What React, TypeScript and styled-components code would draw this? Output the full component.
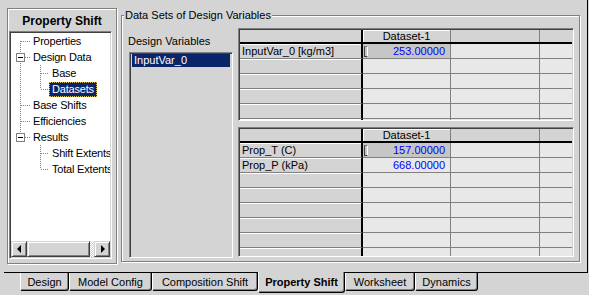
import React from "react";
import styled, { createGlobalStyle, css } from "styled-components";

const FACE = "#d4d4d4";

const GlobalStyle = createGlobalStyle`
  html, body { margin: 0; padding: 0; background: ${FACE}; }
  body {
    font-family: "Liberation Sans", Arial, sans-serif;
    font-size: 11px;
    color: #000;
  }
  * { box-sizing: border-box; }
`;

type TreeNode = {
  label: string;
  level: 1 | 2;
  first?: boolean;
  last?: boolean;
  expanded?: boolean;
  lastChild?: boolean;
  parentLast?: boolean;
  selected?: boolean;
};

const tree: TreeNode[] = [
  { label: "Properties", level: 1, first: true },
  { label: "Design Data", level: 1, expanded: true },
  { label: "Base", level: 2 },
  { label: "Datasets", level: 2, lastChild: true, selected: true },
  { label: "Base Shifts", level: 1 },
  { label: "Efficiencies", level: 1 },
  { label: "Results", level: 1, expanded: true, last: true },
  { label: "Shift Extents", level: 2, parentLast: true },
  { label: "Total Extents", level: 2, lastChild: true, parentLast: true },
];

type GridRowData = { label: string; value?: string; selected?: boolean };

const upperRows: GridRowData[] = [
  { label: "InputVar_0 [kg/m3]", value: "253.00000", selected: true },
  { label: "" },
  { label: "" },
  { label: "" },
  { label: "" },
  { label: "" },
];

const lowerRows: GridRowData[] = [
  { label: "Prop_T (C)", value: "157.00000", selected: true },
  { label: "Prop_P (kPa)", value: "668.00000" },
  { label: "" },
  { label: "" },
  { label: "" },
  { label: "" },
  { label: "" },
  { label: "" },
  { label: "" },
];

const tabs = [
  { label: "Design", w: 49 },
  { label: "Model Config", w: 83 },
  { label: "Composition Shift", w: 106 },
  { label: "Property Shift", w: 87, active: true },
  { label: "Worksheet", w: 70 },
  { label: "Dynamics", w: 63 },
];

const Window = styled.div`
  width: 589px;
  height: 295px;
  background: ${FACE};
  overflow: hidden;
  display: flex;
  flex-direction: column;
`;

const Page = styled.div`
  margin-left: 4px;
  width: 584px;
  height: 273px;
  border-right: 1px solid #000;
  border-bottom: 1px solid #000;
  display: flex;
  align-items: flex-start;
  padding: 8px 0 0 3px;
`;

const etched = css`
  border: 1px solid #808080;
  box-shadow: inset 1px 1px 0 #fff, 1px 1px 0 #fff;
`;

const sunken = css`
  border: 1px solid;
  border-color: #808080 #fff #fff #808080;
  box-shadow: inset 1px 1px 0 #404040, inset -1px -1px 0 ${FACE};
`;

const raised = css`
  border: 1px solid;
  border-color: ${FACE} #404040 #404040 ${FACE};
  box-shadow: inset 1px 1px 0 #fff, inset -1px -1px 0 #808080;
`;

/* left navigation panel */
const NavPanel = styled.div`
  width: 110px;
  height: 256px;
  ${etched};
  display: flex;
  flex-direction: column;
`;

const NavTitle = styled.div`
  height: 22px;
  display: flex;
  align-items: center;
  justify-content: center;
  font-size: 12px;
  font-weight: bold;
  padding-top: 1px;
`;

const TreeBox = styled.div`
  width: 103px;
  height: 228px;
  margin-left: 1px;
  background: #fff;
  ${sunken};
  padding: 1px;
  display: flex;
  flex-direction: column;
`;

const TreeList = styled.div`
  flex: 1;
  overflow: hidden;
`;

const TreeRow = styled.div`
  height: 16px;
  display: flex;
  align-items: center;
  white-space: nowrap;
`;

const TreeLabel = styled.span<{ $selected?: boolean }>`
  line-height: 13px;
  padding: 0 2px;
  letter-spacing: -0.2px;
  border: 1px solid transparent;
  ${(p) =>
    p.$selected &&
    css`
      background: #0a246a;
      color: #fff;
      border: 1px dotted #d8c060;
    `}
`;

const HScroll = styled.div`
  height: 16px;
  display: flex;
`;

const ScrollButton = styled.div`
  width: 16px;
  height: 16px;
  ${raised};
  background: ${FACE};
  display: flex;
  align-items: center;
  justify-content: center;
`;

const Arrow = styled.span<{ $dir: "left" | "right" }>`
  width: 0;
  height: 0;
  border-top: 4px solid transparent;
  border-bottom: 4px solid transparent;
  ${(p) =>
    p.$dir === "left"
      ? css`border-right: 4px solid #000; margin-left: -1px;`
      : css`border-left: 4px solid #000; margin-left: 1px;`}
`;

const ScrollThumb = styled.div`
  width: 63px;
  height: 16px;
  ${raised};
  background: ${FACE};
`;

const ScrollTrack = styled.div`
  flex: 1;
  background: repeating-conic-gradient(#fff 0 25%, ${FACE} 0 50%) 0 0 / 2px 2px;
`;

/* right side */
const Group = styled.div`
  position: relative;
  margin: 7px 0 0 4px;
  width: 459px;
  height: 247px;
  ${etched};
  display: flex;
  padding: 0 0 0 6px;
`;

const GroupCaption = styled.span`
  position: absolute;
  top: -7px;
  left: 2px;
  padding: 0 1px;
  line-height: 13px;
  background: ${FACE};
`;

const VarColumn = styled.div`
  width: 105px;
  padding-top: 19px;
  display: flex;
  flex-direction: column;
`;

const VarLabel = styled.div`
  line-height: 13px;
`;

const VarList = styled.div`
  margin: 4px 0 0 1px;
  width: 104px;
  height: 206px;
  ${sunken};
  padding: 1px 2px;
  background: ${FACE};
`;

const VarItem = styled.div<{ $selected?: boolean }>`
  height: 13px;
  line-height: 13px;
  padding-left: 2px;
  ${(p) =>
    p.$selected &&
    css`
      background: #0a246a;
      color: #fff;
    `}
`;

const GridColumn = styled.div`
  margin-left: 5px;
  padding-top: 12px;
  display: flex;
  flex-direction: column;
  gap: 6px;
`;

const GridBox = styled.div<{ $h: number }>`
  width: 336px;
  height: ${(p) => p.$h}px;
  ${sunken};
  padding: 1px;
  overflow: hidden;
  background: ${FACE};
`;

const GridLine = styled.div<{ $head?: boolean }>`
  display: grid;
  grid-template-columns: 123px 88px 89px 1fr;
  height: ${(p) => (p.$head ? 14 : 15)}px;
  ${(p) => p.$head && css`border-bottom: 2px solid #000;`}
`;

const RowHead = styled.div<{ $corner?: boolean }>`
  border-right: 2px solid #000;
  background: ${FACE};
  line-height: 14px;
  padding-left: 2px;
  white-space: nowrap;
  overflow: hidden;
  ${(p) =>
    !p.$corner &&
    css`
      border-bottom: 1px solid #808080;
      box-shadow: inset 0 1px 0 #fff;
    `}
`;

const ColHead = styled.div<{ $raised?: boolean; $end?: boolean }>`
  background: ${FACE};
  text-align: center;
  line-height: 12px;
  ${(p) => !p.$end && css`border-right: 1px solid #808080;`}
  ${(p) => p.$raised && css`box-shadow: inset 1px 1px 0 #fff;`}
`;

const Cell = styled.div<{ $selected?: boolean; $end?: boolean }>`
  position: relative;
  background: ${(p) => (p.$selected ? "#c6c6c6" : "#e8e8e8")};
  border-bottom: 1px solid #808080;
  ${(p) => !p.$end && css`border-right: 1px solid #808080;`}
  color: #0000ff;
  text-align: right;
  padding-right: 5px;
  line-height: 14px;
`;

const CaretMark = styled.span`
  position: absolute;
  left: 1px;
  top: 2px;
  width: 4px;
  height: 11px;
  border-left: 1px solid #404040;
  border-bottom: 1px solid #404040;
  border-top: 1px solid #808080;
  border-right: 1px solid #fff;
`;

/* tabs */
const TabStrip = styled.div`
  display: flex;
  align-items: flex-start;
  padding-left: 20px;
`;

const Tab = styled.div<{ $w: number; $active?: boolean }>`
  width: ${(p) => p.$w}px;
  height: 18px;
  padding-top: 1px;
  text-align: center;
  line-height: 17px;
  background: ${FACE};
  border-left: 1px solid #fff;
  border-right: 1px solid #000;
  border-bottom: 1px solid #000;
  box-shadow: inset -1px -1px 0 #808080;
  border-radius: 0 0 3px 2px;
  white-space: nowrap;
  ${(p) =>
    p.$active &&
    css`
      margin-top: -1px;
      height: 21px;
      padding-top: 2px;
      line-height: 17px;
      font-weight: bold;
      position: relative;
    `}
`;

const TreeGutter = ({ node }: { node: TreeNode }) => {
  const w = node.level === 1 ? 19 : 38;
  const dots = { stroke: "#808080", strokeDasharray: "1 1", shapeRendering: "crispEdges" as const };
  return (
    <svg width={w} height={16} style={{ flex: "none" }}>
      {node.level === 1 ? (
        <>
          <line x1={9.5} y1={node.first ? 8 : 0} x2={9.5} y2={node.last ? 8 : 16} {...dots} />
          <line x1={10} y1={8.5} x2={19} y2={8.5} {...dots} />
          {node.expanded && (
            <g shapeRendering="crispEdges">
              <rect x={5.5} y={4.5} width={8} height={8} fill="#fff" stroke="#808080" />
              <line x1={7} y1={8.5} x2={12} y2={8.5} stroke="#000" />
            </g>
          )}
        </>
      ) : (
        <>
          {!node.parentLast && <line x1={9.5} y1={0} x2={9.5} y2={16} {...dots} />}
          <line x1={29.5} y1={0} x2={29.5} y2={node.lastChild ? 8 : 16} {...dots} />
          <line x1={30} y1={8.5} x2={38} y2={8.5} {...dots} />
        </>
      )}
    </svg>
  );
};

const DataGrid = ({ rows, height }: { rows: GridRowData[]; height: number }) => (
  <GridBox $h={height}>
    <GridLine $head>
      <RowHead $corner />
      <ColHead $raised>Dataset-1</ColHead>
      <ColHead />
      <ColHead $end />
    </GridLine>
    {rows.map((r, i) => (
      <GridLine key={i}>
        <RowHead>{r.label}</RowHead>
        <Cell $selected={r.selected}>
          {r.selected && <CaretMark />}
          {r.value}
        </Cell>
        <Cell />
        <Cell $end />
      </GridLine>
    ))}
  </GridBox>
);

export default function App() {
  return (
    <Window>
      <GlobalStyle />
      <Page>
        <NavPanel>
          <NavTitle>Property Shift</NavTitle>
          <TreeBox>
            <TreeList>
              {tree.map((n) => (
                <TreeRow key={n.label}>
                  <TreeGutter node={n} />
                  <TreeLabel $selected={n.selected}>{n.label}</TreeLabel>
                </TreeRow>
              ))}
            </TreeList>
            <HScroll>
              <ScrollButton>
                <Arrow $dir="left" />
              </ScrollButton>
              <ScrollThumb />
              <ScrollTrack />
              <ScrollButton>
                <Arrow $dir="right" />
              </ScrollButton>
            </HScroll>
          </TreeBox>
        </NavPanel>
        <Group>
          <GroupCaption>Data Sets of Design Variables</GroupCaption>
          <VarColumn>
            <VarLabel>Design Variables</VarLabel>
            <VarList>
              <VarItem $selected>InputVar_0</VarItem>
            </VarList>
          </VarColumn>
          <GridColumn>
            <DataGrid rows={upperRows} height={93} />
            <DataGrid rows={lowerRows} height={130} />
          </GridColumn>
        </Group>
      </Page>
      <TabStrip>
        {tabs.map((t) => (
          <Tab key={t.label} $w={t.w} $active={t.active}>
            {t.label}
          </Tab>
        ))}
      </TabStrip>
    </Window>
  );
}
